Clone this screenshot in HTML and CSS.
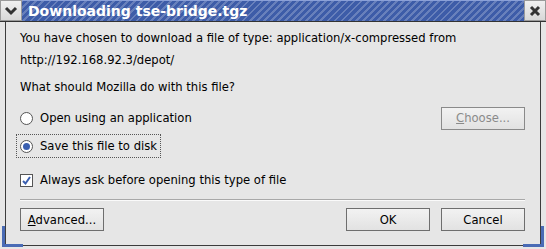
FILE: index.html
```html
<!DOCTYPE html>
<html lang="en">
<head>
    <meta charset="UTF-8">
    <title>Downloading tse-bridge.tgz</title>
    <link rel="stylesheet" href="styles.css">
</head>
<body>
    <div class="window">
        <div class="titlebar">
            <div class="tb-button menu">
                <svg width="14" height="10" viewBox="0 0 14 10"><path d="M2 2 L7 7 L12 2" fill="none" stroke="#333" stroke-width="3"/></svg>
            </div>
            <div class="title">Downloading tse-bridge.tgz</div>
            <div class="tb-button close">
                <svg width="12" height="12" viewBox="0 0 12 12"><path d="M2 2 L10 10 M10 2 L2 10" fill="none" stroke="#333" stroke-width="3"/></svg>
            </div>
        </div>
        <div class="frame">
            <div class="content">
                <p class="msg">You have chosen to download a file of type: application/x-compressed from</p>
                <p class="msg">http://192.168.92.3/depot/</p>
                <p class="question">What should Mozilla do with this file?</p>

                <div class="option-row">
                    <label class="radio"><span class="radio-dot"></span>Open using an application</label>
                    <button class="btn disabled"><u>C</u>hoose...</button>
                </div>
                <div class="option-row">
                    <label class="radio focused"><span class="radio-dot checked"></span>Save this file to disk</label>
                </div>

                <label class="check"><span class="check-box">
                    <svg width="11" height="11" viewBox="0 0 11 11"><path d="M2 6 L4.5 8.5 L9 2" fill="none" stroke="#3a5fb0" stroke-width="2"/></svg>
                </span>Always ask before opening this type of file</label>

                <div class="separator"></div>

                <div class="actions">
                    <button class="btn"><u>A</u>dvanced...</button>
                    <div class="spacer"></div>
                    <button class="btn">OK</button>
                    <button class="btn">Cancel</button>
                </div>
            </div>
            <span class="corner left"></span>
            <span class="corner right"></span>
        </div>
    </div>
</body>
</html>
```

FILE: styles.css
```css
body {
    margin: 0;
    background-color: #e6e6e6;
    font-family: "DejaVu Sans", Verdana, sans-serif;
    font-size: 11.6px;
    color: #000;
}
.window {
    width: 546px;
    height: 249px;
    box-sizing: border-box;
    display: flex;
    flex-direction: column;
    background-color: #e6e6e6;
}
.titlebar {
    height: 22px;
    display: flex;
    align-items: stretch;
    border-bottom: 1px solid #333;
    box-sizing: border-box;
}
.tb-button {
    width: 22px;
    display: flex;
    align-items: center;
    justify-content: center;
    background: linear-gradient(#f0f0f0, #d8d8d8);
    border: 1px solid #9a9a9a;
    box-sizing: border-box;
}
.title {
    flex: 1;
    color: #fff;
    font-weight: bold;
    font-size: 14px;
    line-height: 20px;
    padding-left: 6px;
    border-top: 1px solid #8aa0d8;
    background-color: #3d5ca8;
    background-image:
        repeating-linear-gradient(-45deg, rgba(255,255,255,0) 0 3px, rgba(255,255,255,0.22) 3px 5px),
        linear-gradient(to right, #3d5ca8 0%, #3d5ca8 60%, rgba(61,92,168,0) 80%);
}
.frame {
    flex: 1;
    position: relative;
    margin: 0 5px 3px 5px;
    border-left: 1px solid #3c3c3c;
    border-right: 1px solid #3c3c3c;
    border-bottom: 1px solid #3c3c3c;
}
.content {
    padding: 5px 15px 0 14px;
}
.msg {
    margin: 0;
    line-height: 22px;
}
.question {
    margin: 5px 0 6px 0;
    line-height: 22px;
}
.option-row {
    display: flex;
    justify-content: space-between;
    align-items: center;
    height: 28px;
}
.radio, .check {
    display: flex;
    align-items: center;
    gap: 7px;
    margin-left: -4px;
    padding: 4px 3px;
    border: 1px dotted transparent;
}
.radio.focused {
    border-color: #555;
}
.radio-dot {
    width: 13px;
    height: 13px;
    border-radius: 50%;
    border: 1px solid #555;
    background: #fff;
    box-sizing: border-box;
    position: relative;
}
.radio-dot.checked::after {
    content: "";
    position: absolute;
    left: 2px;
    top: 2px;
    width: 7px;
    height: 7px;
    border-radius: 50%;
    background: #3a5fb0;
}
.check {
    margin-top: 8px;
    align-self: flex-start;
    width: max-content;
}
.check-box {
    width: 13px;
    height: 13px;
    border: 1px solid #555;
    background: #fff;
    box-sizing: border-box;
    display: flex;
    align-items: center;
    justify-content: center;
}
.separator {
    margin-top: 7px;
    border-top: 1px solid #a8a8a8;
    border-bottom: 1px solid #fafafa;
}
.actions {
    display: flex;
    gap: 11px;
    margin-top: 7px;
}
.spacer {
    flex: 1;
}
.btn {
    width: 84px;
    height: 23px;
    font-family: inherit;
    font-size: 11.6px;
    color: #000;
    background: linear-gradient(#f2f2f2, #e2e2e2);
    border: 1px solid #6e6e6e;
    padding: 0;
}
.btn.disabled {
    color: #8a8a8a;
    border-color: #8a8a8a;
}
.corner {
    position: absolute;
    bottom: -2px;
    width: 18px;
    height: 18px;
    border-bottom: 3px solid #4a6bb5;
}
.corner.left {
    left: -4px;
    border-left: 3px solid #4a6bb5;
}
.corner.right {
    right: -4px;
    border-right: 3px solid #4a6bb5;
}
```
